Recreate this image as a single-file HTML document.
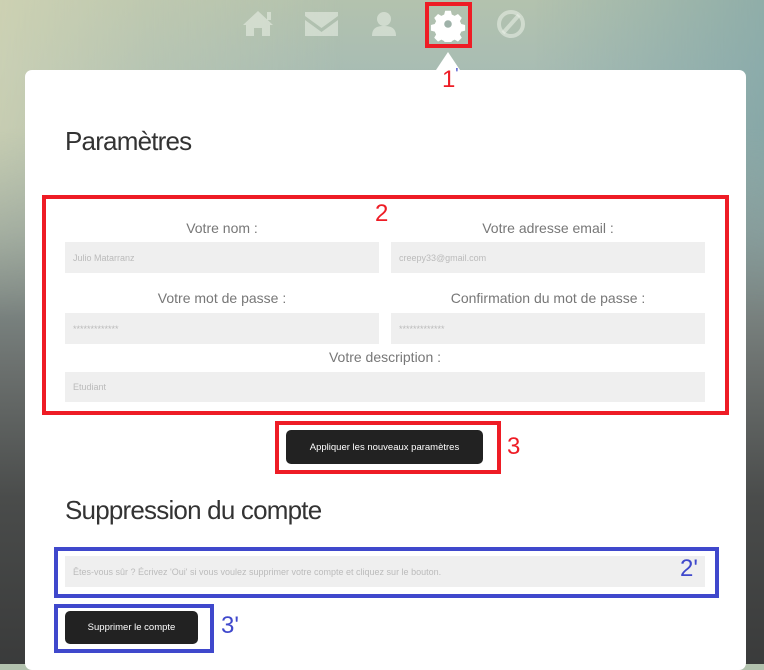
<!DOCTYPE html>
<html><head><meta charset="utf-8"><style>
*{box-sizing:border-box;margin:0;padding:0}
body{width:764px;height:664px;overflow:hidden;position:relative;font-family:"Liberation Sans",sans-serif;
background:linear-gradient(180deg,#b3c2ae 0%,#a9bdb3 10%,#9fb3ab 20%,#8d9c98 35%,#6c716f 55%,#4a4c4b 75%,#3a3b3b 100%);}
.bgl{position:absolute;left:0;top:0;width:764px;height:320px;background:linear-gradient(90deg,rgba(215,215,180,0.7) 0%,rgba(215,215,180,0.3) 20%,rgba(215,215,180,0) 45%,rgba(120,160,165,0) 70%,rgba(120,160,165,0.6) 100%);-webkit-mask-image:linear-gradient(180deg,#000 40%,transparent 100%);mask-image:linear-gradient(180deg,#000 40%,transparent 100%)}
.card{position:absolute;left:25px;top:70px;width:721px;height:600px;background:#fff;border-radius:7px}
.tri{position:absolute;left:436px;top:52px;width:0;height:0;border-left:12px solid transparent;border-right:12px solid transparent;border-bottom:18px solid #fff}
.abs{position:absolute}
h2{position:absolute;font-weight:normal;color:#333;font-size:26px;letter-spacing:-0.8px}
.lbl{position:absolute;font-size:14px;color:#777;text-align:center}
.inp{position:absolute;background:#efefef;font-size:9px;color:#bbb;padding-left:8px;display:flex;align-items:center}
.btn{position:absolute;background:#222;color:#fff;border-radius:5px;font-size:9.5px;display:flex;align-items:center;justify-content:center}
.rb{position:absolute;border:4px solid #ee1c25}
.bb{position:absolute;border:4px solid #3f48cc}
.num{position:absolute;font-size:24px}
</style></head><body>
<div class="bgl"></div>
<svg class="abs" style="left:240px;top:6px" width="300" height="36" viewBox="0 0 300 36">
<g fill="rgba(235,240,232,0.55)">
<path d="M3 19 L18 5 L33 19 L30 19 L30 30 L22 30 L22 22 L14 22 L14 30 L6 30 L6 19 Z"/>
<rect x="27" y="6" width="4" height="8"/>
<path d="M65 6 H98 V10 L81.5 22 L65 10 Z"/>
<path d="M65 14 L81.5 26 L98 14 V30 H65 Z"/>
<circle cx="144" cy="13" r="7"/>
<path d="M132 30 C132 22 137 20 144 20 C151 20 156 22 156 30 Z"/>
<circle cx="271" cy="18" r="12" fill="none" stroke="rgba(235,240,232,0.55)" stroke-width="4"/>
<path d="M263 27 L279 9" stroke="rgba(235,240,232,0.55)" stroke-width="4"/>
</g>
<g transform="translate(208,18) scale(0.95)" fill="#fff">
<path d="M-3-14h6l1 4 3 1.5 3.5-2 4 4-2 3.5 1.5 3 4 1v6l-4 1-1.5 3 2 3.5-4 4-3.5-2-3 1.5-1 4h-6l-1-4-3-1.5-3.5 2-4-4 2-3.5-1.5-3-4-1v-6l4-1 1.5-3-2-3.5 4-4 3.5 2 3-1.5z"/>
<circle r="4" fill="#9fb2a9"/>
</g>
</svg>
<div class="rb" style="left:425px;top:2px;width:47px;height:46px"></div>
<div class="tri"></div>
<div class="card"></div>
<div class="num" style="left:442px;top:66px;color:#ee1c25">1<span style="color:#3f48cc;font-size:16px;vertical-align:top">'</span></div>
<h2 style="left:65px;top:126px">Paramètres</h2>
<div class="rb" style="left:42px;top:195px;width:687px;height:220px"></div>
<div class="num" style="left:375px;top:200px;color:#ee1c25">2</div>
<div class="lbl" style="left:65px;top:220px;width:314px">Votre nom :</div>
<div class="lbl" style="left:391px;top:220px;width:314px">Votre adresse email :</div>
<div class="inp" style="left:65px;top:242px;width:314px;height:31px">Julio Matarranz</div>
<div class="inp" style="left:391px;top:242px;width:314px;height:31px">creepy33@gmail.com</div>
<div class="lbl" style="left:65px;top:290px;width:314px">Votre mot de passe :</div>
<div class="lbl" style="left:391px;top:290px;width:314px">Confirmation du mot de passe :</div>
<div class="inp" style="left:65px;top:313px;width:314px;height:31px">*************</div>
<div class="inp" style="left:391px;top:313px;width:314px;height:31px">*************</div>
<div class="lbl" style="left:65px;top:349px;width:640px">Votre description :</div>
<div class="inp" style="left:65px;top:372px;width:640px;height:30px">Etudiant</div>
<div class="rb" style="left:275px;top:421px;width:226px;height:53px"></div>
<div class="btn" style="left:286px;top:430px;width:197px;height:34px">Appliquer les nouveaux paramètres</div>
<div class="num" style="left:507px;top:433px;color:#ee1c25">3</div>
<h2 style="left:65px;top:495px">Suppression du compte</h2>
<div class="bb" style="left:54px;top:547px;width:665px;height:51px"></div>
<div class="inp" style="left:65px;top:556px;width:640px;height:31px">Êtes-vous sûr ? Écrivez 'Oui' si vous voulez supprimer votre compte et cliquez sur le bouton.</div>
<div class="num" style="left:680px;top:555px;color:#3f48cc">2'</div>
<div class="bb" style="left:54px;top:604px;width:160px;height:49px"></div>
<div class="btn" style="left:65px;top:611px;width:133px;height:33px">Supprimer le compte</div>
<div class="num" style="left:221px;top:612px;color:#3f48cc">3'</div>
</body></html>
